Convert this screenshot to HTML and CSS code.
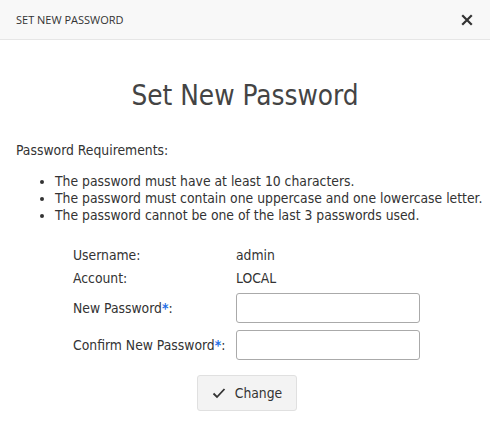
FILE: index.html
```html
<!DOCTYPE html>
<html>
<head>
<meta charset="utf-8">
<link rel="stylesheet" href="styles.css">
</head>
<body>
<div class="dialog">
  <div class="header">
    <span class="header-title">SET NEW PASSWORD</span>
    <span class="close">
      <svg width="12" height="12" viewBox="0 0 12 12"><path d="M2 2L10 10M10 2L2 10" stroke="#333" stroke-width="2.2" stroke-linecap="square"/></svg>
    </span>
  </div>
  <div class="content">
    <h1 class="title">Set New Password</h1>
    <p class="req">Password Requirements:</p>
    <ul class="rules">
      <li>The password must have at least 10 characters.</li>
      <li>The password must contain one uppercase and one lowercase letter.</li>
      <li>The password cannot be one of the last 3 passwords used.</li>
    </ul>
    <div class="form">
      <div class="row"><span class="label">Username:</span><span class="value">admin</span></div>
      <div class="row"><span class="label">Account:</span><span class="value">LOCAL</span></div>
      <div class="row field"><span class="label">New Password<span class="star">*</span>:</span><input class="input" type="password"></div>
      <div class="row field"><span class="label">Confirm New Password<span class="star">*</span>:</span><input class="input" type="password"></div>
    </div>
    <div class="actions">
      <button class="btn">
        <svg width="14" height="12" viewBox="0 0 14 12"><path d="M1.5 6.5L5 10L12.5 2" fill="none" stroke="#333" stroke-width="1.8"/></svg>
        <span>Change</span>
      </button>
    </div>
  </div>
</div>
</body>
</html>
```
FILE: styles.css
```css
html, body {
  margin: 0;
  padding: 0;
  background: #fff;
}
body {
  font-family: "DejaVu Sans Condensed", "DejaVu Sans", sans-serif;
  color: #333;
  font-size: 13.8px;
}
.dialog {
  width: 490px;
  height: 425px;
  background: #fff;
}
.header {
  height: 39px;
  border-bottom: 1px solid #e6e6e6;
  background: #f8f8f8;
  display: flex;
  align-items: center;
  justify-content: space-between;
  padding: 0 16px;
}
.header-title {
  font-family: "Open Sans", sans-serif;
  font-size: 11px;
  color: #333;
}
.close {
  display: flex;
  margin-right: 1px;
}
.content {
  padding: 0 16px;
}
.title {
  margin: 40px 0 0;
  height: 32px;
  line-height: 32px;
  font-weight: normal;
  font-size: 27.7px;
  text-align: center;
  color: #444;
}
.req {
  margin: 30px 0 0;
  line-height: 17px;
}
.rules {
  margin: 14px -16px 0 0;
  padding-left: 39px;
  line-height: 17px;
  white-space: nowrap;
}
.form {
  margin: 19px 0 0 57px;
  display: flex;
  flex-direction: column;
}
.row {
  display: flex;
  align-items: center;
  height: 23px;
}
.row.field {
  height: 30px;
  margin-top: 7px;
}
.row:nth-child(3) {
  margin-top: 4px;
}
.label {
  width: 163px;
}
.star {
  color: #1f6fe5;
  font-weight: bold;
}
.input {
  width: 184px;
  height: 30px;
  box-sizing: border-box;
  border: 1px solid #aaa;
  border-radius: 3px;
  margin: 0;
  padding: 0 6px;
}
.actions {
  display: flex;
  justify-content: center;
  margin-top: 15px;
  padding-left: 4px;
}
.btn {
  width: 100px;
  height: 36px;
  background: #f3f3f3;
  border: 1px solid #e0e0e0;
  border-radius: 3px;
  display: flex;
  align-items: center;
  justify-content: center;
  gap: 9px;
  font-family: inherit;
  font-size: 13.8px;
  color: #333;
  padding: 0;
}
```
